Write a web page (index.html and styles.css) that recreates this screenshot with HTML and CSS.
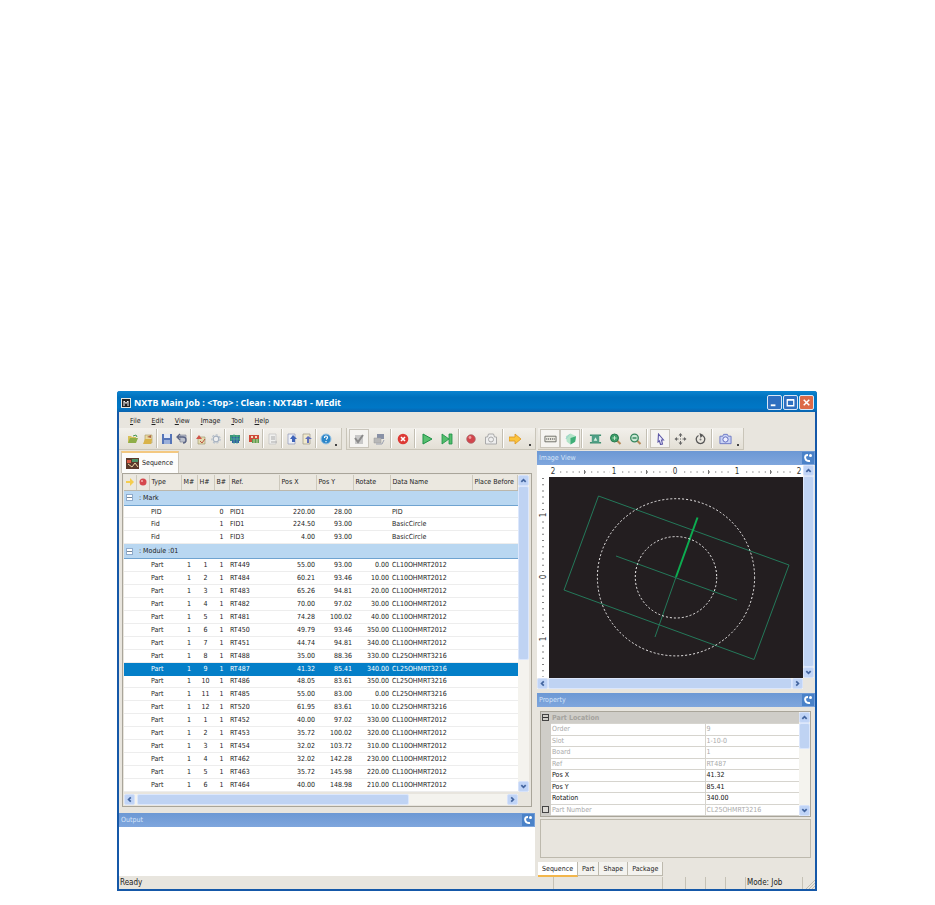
FILE: index.html
```html
<!DOCTYPE html>
<html lang="en">
<head>
<meta charset="utf-8">
<title>MEdit</title>
<link rel="stylesheet" href="styles.css">
</head>
<body>
<main class="window">
  <header class="titlebar">
    <svg class="app-icon" viewBox="0 0 10 10"><rect width="10" height="10" fill="#e8e8e0"/><rect x="1" y="1" width="8" height="8" fill="#222"/><path d="M3 8V3l2 2.500 2-2.500v5" stroke="#fff" fill="none"/></svg>
    <h1>NXTB Main Job : &lt;Top&gt; : Clean : NXT4B1 - MEdit</h1>
    <div class="caption-buttons">
      <button class="cap" aria-label="Minimize"><svg viewBox="0 0 14 14"><path d="M3 10h5" stroke="#fff" stroke-width="2"/></svg></button>
      <button class="cap" aria-label="Maximize"><svg viewBox="0 0 14 14"><path d="M3.500 4.500h7v6h-7zM3 4h8" stroke="#fff" stroke-width="1.400" fill="none"/></svg></button>
      <button class="cap cap-close" aria-label="Close"><svg viewBox="0 0 14 14"><path d="M4 4l6 6M10 4l-6 6" stroke="#fff" stroke-width="1.600"/></svg></button>
    </div>
  </header>

  <nav class="menubar">
    <button><u>F</u>ile</button><button><u>E</u>dit</button><button><u>V</u>iew</button><button><u>I</u>mage</button><button><u>T</u>ool</button><button><u>H</u>elp</button>
  </nav>

  <div class="toolbars">
    <div class="left-bars">
    <div class="toolbar narrow">
      <button aria-label="Open"><svg viewBox="0 0 12 12"><path d="M1 10V3h3l1 1h4v2" fill="#d8c05a"/><path d="M1 10l2-5h8l-2 5z" fill="#8fae48"/><path d="M6 3l3-1 1 2" stroke="#4a9a50" fill="none"/></svg></button>
      <button aria-label="Open job"><svg viewBox="0 0 12 12"><path d="M3 2h7v8H3z" fill="#e9d9a0" stroke="#a89860" stroke-width=".6"/><path d="M1 11l2-5h7l-1 5z" fill="#d9b34a"/><path d="M5 4l4-2v3z" fill="#b06a48"/></svg></button>
      <i class="sep"></i>
      <button aria-label="Save"><svg viewBox="0 0 12 12"><path d="M1 1h10v10H1z" fill="#5675b8"/><path d="M3 1h6v4H3z" fill="#e3e9f6"/><path d="M3 7h6v4H3z" fill="#9bb0da"/></svg></button>
      <button aria-label="Undo"><svg viewBox="0 0 12 12"><path d="M4 2h6v7H4z" fill="#bcc0cc" stroke="#777c90" stroke-width=".6"/><path d="M2 4h5q3 0 3 3t-3 3M4 1L1 4l3 3" stroke="#5b6484" stroke-width="1.300" fill="none"/></svg></button>
      <i class="sep"></i>
      <button aria-label="Check"><svg viewBox="0 0 12 12"><path d="M3 4h7v7H3z" fill="#e5dcb0" stroke="#999268" stroke-width=".6"/><path d="M1 6l3-4 3 4z" fill="#d0564a"/><path d="M5 8l2 2 3-4" stroke="#ba5040" fill="none"/></svg></button>
      <button aria-label="Options"><svg viewBox="0 0 12 12"><circle cx="6" cy="6" r="2.800" stroke="#a5b0bf" stroke-width="1.200" fill="#eee"/><circle cx="6" cy="6" r="4.200" stroke="#b7c0cb" stroke-width="1.200" stroke-dasharray="2 1.800" fill="none"/></svg></button>
      <i class="sep"></i>
      <button aria-label="Board"><svg viewBox="0 0 12 12"><path d="M1 2h10v6H1z" fill="#3a9478"/><path d="M3 4h7v6H3z" fill="#305ea0"/><path d="M5 1v10M8 2v9M2 6h9" stroke="#50b990" stroke-width=".8"/></svg></button>
      <i class="sep"></i>
      <button aria-label="Panel"><svg viewBox="0 0 12 12"><path d="M1 2h10v7H1z" fill="#cf4a3a"/><path d="M3 3h2v2H3zM7 3h2v2H7z" fill="#f2dcc0"/><path d="M4 6h7v4H4z" fill="#5c9b50"/><path d="M6 6v4M9 6v4" stroke="#e6e3b0" stroke-width=".8"/></svg></button>
      <i class="sep"></i>
      <button aria-label="Report"><svg viewBox="0 0 12 12"><path d="M2 1h7v10H2z" fill="#f0f0ee" stroke="#c0c0c0" stroke-width=".7"/><path d="M4 4h4M4 6h4M4 9h6" stroke="#aaa"/></svg></button>
      <i class="sep"></i>
      <button aria-label="Import"><svg viewBox="0 0 12 12"><path d="M2 1h7v10H2z" fill="#edf0f8" stroke="#8c97b8" stroke-width=".7"/><path d="M7 2L4 6h2v3h3V6h2z" fill="#3f64b8"/></svg></button>
      <button aria-label="Export"><svg viewBox="0 0 12 12"><path d="M2 1h7v10H2z" fill="#f0e9cc" stroke="#9d9888" stroke-width=".7"/><path d="M7 3L4 6h2v4h2V6h3z" fill="#6270ba"/></svg></button>
      <i class="sep"></i>
      <button aria-label="Help"><svg viewBox="0 0 12 12"><circle cx="6" cy="6" r="5" fill="#2c86c8" stroke="#9bc4e4"/><path d="M4.500 5q0-2 1.500-2t1.500 1.500Q7.500 5.500 6 6.500M6 8v1.200" stroke="#fff" stroke-width="1.200" fill="none"/></svg></button>
      <b class="more"></b>
    </div>
    <div class="toolbar">
      <button class="on" aria-label="Verify"><svg viewBox="0 0 12 12"><path d="M2 2h8v9H2z" fill="#c8c8c8"/><path d="M2 5l3 4 5-7" stroke="#8a8a8a" stroke-width="2" fill="none"/></svg></button>
      <button aria-label="Transfer"><svg viewBox="0 0 12 12"><path d="M4 1h7v5H4z" fill="#8991a6"/><path d="M1 5h7v5H1z" fill="#b8b8b8" stroke="#999" stroke-width=".5"/><path d="M3 11h6l2-4" stroke="#9aa0b0" fill="none"/></svg></button>
      <i class="sep"></i>
      <button aria-label="Cancel"><svg viewBox="0 0 12 12"><circle cx="6" cy="6" r="5.300" fill="#dd3a35"/><path d="M4 4l4 4M8 4L4 8" stroke="#fff" stroke-width="1.600"/></svg></button>
      <i class="sep"></i>
      <button aria-label="Run"><svg viewBox="0 0 12 12"><path d="M2 1l9 5-9 5z" fill="#58c070" stroke="#1d9146"/></svg></button>
      <button aria-label="Step"><svg viewBox="0 0 12 12"><path d="M1 1l7 5V1h3v10H8V6l-7 5z" fill="#53bd6c" stroke="#1d9146" stroke-width=".8"/></svg></button>
      <i class="sep"></i>
      <button aria-label="Record"><svg viewBox="0 0 12 12"><circle cx="6" cy="6" r="4.300" fill="#d2454c" stroke="#a4686a" stroke-width=".7"/><circle cx="5" cy="4.500" r="1.400" fill="#f0a0a0"/></svg></button>
      <button aria-label="Capture"><svg viewBox="0 0 12 12"><path d="M0.500 4h2l1-3h5l1 3h2v7h-11z" fill="#eee" stroke="#aaa"/><circle cx="6" cy="6.500" r="2.500" fill="none" stroke="#aaa"/></svg></button>
      <i class="sep"></i>
      <button aria-label="Next"><svg viewBox="0 0 12 12"><path d="M0 4h6V1l6 5-6 5V8H0z" fill="#fbc33c" stroke="#dc9420" stroke-width=".8"/></svg></button>
      <b class="more"></b>
    </div>
    </div>
    <div class="right-bars">
    <div class="toolbar">
      <button class="on" aria-label="Scale"><svg viewBox="0 0 14 12"><path d="M1 3h12v6H1z" fill="#ecebe2" stroke="#6c6c66"/><path d="M3 5v2M5 5v2M7 5v2M9 5v2M11 5v2" stroke="#777"/></svg></button>
      <button class="on" aria-label="Image"><svg viewBox="0 0 14 12"><path d="M2 3l5-3 6 3-1 6-5 3-4-3z" fill="#b2e4c8"/><path d="M7 5l6-2-1 6-5 3z" fill="#3fae78"/><path d="M2 6l4-5" stroke="#9cc" /></svg></button>
      <i class="sep"></i>
      <button aria-label="Fit"><svg viewBox="0 0 14 12"><path d="M1 2h12M1 10h12" stroke="#3f8f70" stroke-width="1.500"/><path d="M3 2h8v8H3z" fill="#4f9f86"/><path d="M5 8l2-4 2 4" fill="#d8f0e0"/></svg></button>
      <button aria-label="Zoom in"><svg viewBox="0 0 12 12"><path d="M7 7l4 4" stroke="#b58a58" stroke-width="2"/><circle cx="5" cy="5" r="4" fill="#3f9f6a" stroke="#277a50"/><path d="M3 5h4M5 3v4" stroke="#d8f0d8" stroke-width=".8"/></svg></button>
      <button aria-label="Zoom out"><svg viewBox="0 0 12 12"><path d="M7 7l4 4" stroke="#b58a58" stroke-width="2"/><circle cx="5" cy="5" r="3.800" fill="#c8e8d4" stroke="#36875f" stroke-width="1.300"/><path d="M3 5h4" stroke="#277a50" stroke-width="1.300"/></svg></button>
      <i class="sep"></i>
      <button class="on" aria-label="Select"><svg viewBox="0 0 12 12"><path d="M4 1l5 6H7l1 4-2 .5L5 8 3.500 9z" fill="#eef" stroke="#5d58a6" stroke-width="1.100"/></svg></button>
      <button aria-label="Move"><svg viewBox="0 0 12 12"><path d="M6 0l2 2.500H4zM6 12l2-2.500H4zM0 6l2.500-2v4zM12 6L9.500 4v4z" fill="#666"/><path d="M6 2v2M6 8v2M2 6h2M8 6h2M5.500 6h1" stroke="#666"/></svg></button>
      <button aria-label="Rotate"><svg viewBox="0 0 12 12"><path d="M4 2.500a4.300 4.300 0 1 0 4 0" fill="none" stroke="#555" stroke-width="1.300"/><path d="M5 0l4 2-3 3z" fill="#555"/><circle cx="6" cy="6.500" r="1" fill="#777"/></svg></button>
      <i class="sep"></i>
      <button aria-label="Snapshot"><svg viewBox="0 0 14 12"><path d="M1 3h3l1-2h4l1 2h3v8H1z" fill="#c9d2f4" stroke="#6a76c4"/><circle cx="7" cy="6.500" r="2.800" fill="#eef" stroke="#5a66b8"/></svg></button>
      <b class="more"></b>
    </div>
    </div>
  </div>

  <div class="workspace">
    <section class="left">
      <div class="doc-tabs" role="tablist">
        <button class="doc-tab" role="tab" aria-selected="true"><svg viewBox="0 0 13 11"><rect width="13" height="11" fill="#5c3a2c"/><path d="M1 2h4v3H1z" fill="#d85a44"/><path d="M6 1h6v3H6z" fill="#4a9468"/><path d="M2 6l4 3 3-4 3 4" stroke="#f0d8a8" fill="none"/></svg>Sequence</button>
      </div>
      <div class="list">
        <table class="seq">
          <colgroup><col class="c-a"><col class="c-b"><col class="c-type"><col class="c-m"><col class="c-h"><col class="c-bd"><col class="c-ref"><col class="c-n"><col class="c-n"><col class="c-rot"><col class="c-data"><col></colgroup>
          <thead><tr>
            <th><svg viewBox="0 0 8 8"><path d="M0 3h4V0l4 4-4 4V5H0z" fill="#f5cd4e"/></svg></th>
            <th><svg viewBox="0 0 8 8"><circle cx="4" cy="4" r="3.500" fill="#d5484e"/><circle cx="3" cy="3" r="1" fill="#f3b0b0"/></svg></th>
            <th>Type</th><th>M#</th><th>H#</th><th>B#</th><th>Ref.</th><th>Pos X</th><th>Pos Y</th><th>Rotate</th><th>Data Name</th><th>Place Before</th></tr></thead>
          <tbody>
            <tr class="group"><td colspan="12"><button class="fold" aria-label="Collapse"></button>: Mark</td></tr>
            <tr><td><td><td>PID<td><td><td>0<td>PID1<td>220.00<td>28.00<td><td>PID<td></tr>
            <tr><td><td><td>Fid<td><td><td>1<td>FID1<td>224.50<td>93.00<td><td>BasicCircle<td></tr>
            <tr><td><td><td>Fid<td><td><td>1<td>FID3<td>4.00<td>93.00<td><td>BasicCircle<td></tr>
            <tr class="group"><td colspan="12"><button class="fold" aria-label="Collapse"></button>: Module :01</td></tr>
            <tr><td><td><td>Part<td>1<td>1<td>1<td>RT449<td>55.00<td>93.00<td>0.00<td>CL10OHMRT2012<td></tr>
            <tr><td><td><td>Part<td>1<td>2<td>1<td>RT484<td>60.21<td>93.46<td>10.00<td>CL10OHMRT2012<td></tr>
            <tr><td><td><td>Part<td>1<td>3<td>1<td>RT483<td>65.26<td>94.81<td>20.00<td>CL10OHMRT2012<td></tr>
            <tr><td><td><td>Part<td>1<td>4<td>1<td>RT482<td>70.00<td>97.02<td>30.00<td>CL10OHMRT2012<td></tr>
            <tr><td><td><td>Part<td>1<td>5<td>1<td>RT481<td>74.28<td>100.02<td>40.00<td>CL10OHMRT2012<td></tr>
            <tr><td><td><td>Part<td>1<td>6<td>1<td>RT450<td>49.79<td>93.46<td>350.00<td>CL10OHMRT2012<td></tr>
            <tr><td><td><td>Part<td>1<td>7<td>1<td>RT451<td>44.74<td>94.81<td>340.00<td>CL10OHMRT2012<td></tr>
            <tr><td><td><td>Part<td>1<td>8<td>1<td>RT488<td>35.00<td>88.36<td>330.00<td>CL25OHMRT3216<td></tr>
            <tr class="selected"><td><td><td>Part<td>1<td>9<td>1<td>RT487<td>41.32<td>85.41<td>340.00<td>CL25OHMRT3216<td></tr>
            <tr><td><td><td>Part<td>1<td>10<td>1<td>RT486<td>48.05<td>83.61<td>350.00<td>CL25OHMRT3216<td></tr>
            <tr><td><td><td>Part<td>1<td>11<td>1<td>RT485<td>55.00<td>83.00<td>0.00<td>CL25OHMRT3216<td></tr>
            <tr><td><td><td>Part<td>1<td>12<td>1<td>RT520<td>61.95<td>83.61<td>10.00<td>CL25OHMRT3216<td></tr>
            <tr><td><td><td>Part<td>1<td>1<td>1<td>RT452<td>40.00<td>97.02<td>330.00<td>CL10OHMRT2012<td></tr>
            <tr><td><td><td>Part<td>1<td>2<td>1<td>RT453<td>35.72<td>100.02<td>320.00<td>CL10OHMRT2012<td></tr>
            <tr><td><td><td>Part<td>1<td>3<td>1<td>RT454<td>32.02<td>103.72<td>310.00<td>CL10OHMRT2012<td></tr>
            <tr><td><td><td>Part<td>1<td>4<td>1<td>RT462<td>32.02<td>142.28<td>230.00<td>CL10OHMRT2012<td></tr>
            <tr><td><td><td>Part<td>1<td>5<td>1<td>RT463<td>35.72<td>145.98<td>220.00<td>CL10OHMRT2012<td></tr>
            <tr><td><td><td>Part<td>1<td>6<td>1<td>RT464<td>40.00<td>148.98<td>210.00<td>CL10OHMRT2012<td></tr>
          </tbody>
        </table>
        <div class="vbar"><button aria-label="Scroll up"><svg viewBox="0 0 8 8"><path d="M1.500 5.500L4 3l2.500 2.500"/></svg></button><span class="thumb list-v"></span><button class="end" aria-label="Scroll down"><svg viewBox="0 0 8 8"><path d="M1.500 2.500L4 5l2.500-2.500"/></svg></button></div>
        <div class="hbar"><button aria-label="Scroll left"><svg viewBox="0 0 8 8"><path d="M5.500 1.500L3 4l2.500 2.500"/></svg></button><span class="thumb list-h"></span><button class="end" aria-label="Scroll right"><svg viewBox="0 0 8 8"><path d="M2.500 1.500L5 4 2.500 6.500"/></svg></button></div>
      </div>
      <h2 class="pane-title">Output<button class="pin" aria-label="Pin"><svg viewBox="0 0 10 10"><path d="M5 2Q1 2 2.500 6q1 2.500 4.500 2" stroke="#fff" stroke-width="2" fill="none"/><circle cx="7.500" cy="2.500" r="1.500" fill="#fff"/></svg></button></h2>
      <div class="output"></div>
    </section>

    <section class="right">
      <h2 class="pane-title">Image View<button class="pin" aria-label="Pin"><svg viewBox="0 0 10 10"><path d="M5 2Q1 2 2.500 6q1 2.500 4.500 2" stroke="#fff" stroke-width="2" fill="none"/><circle cx="7.500" cy="2.500" r="1.500" fill="#fff"/></svg></button></h2>
      <div class="viewer">
        <svg class="ruler-x" viewBox="0 0 266 12">
          <path d="M17 7h248" stroke="#555" stroke-width="1.200" stroke-dasharray="1 5.200"/>
          <path d="M47.500 5v4M109.500 5v4M171.500 5v4M233.500 5v4" stroke="#777"/>
          <g fill="#fff"><path d="M12 1h7v11h-7zM73 1h8v11h-8zM135 1h7v11h-7zM196 1h8v11h-8zM258 1h8v11h-8z"/></g>
          <g class="marks"><text x="16" y="9">2</text><text x="77" y="9">1</text><text x="138" y="9">0</text><text x="200" y="9">1</text><text x="262" y="9">2</text></g>
        </svg>
        <svg class="ruler-y" viewBox="0 0 12 201">
          <path d="M6 1v199" stroke="#555" stroke-width="1.500" stroke-dasharray="1 5.200"/>
          <g fill="#fff"><path d="M2 34h9v8H2zM2 96h9v8H2zM2 158h9v8H2z"/></g>
          <g class="marks"><text transform="translate(9 38) rotate(-90)">1</text><text transform="translate(9 100) rotate(-90)">0</text><text transform="translate(9 162) rotate(-90)">1</text></g>
        </svg>
        <svg class="canvas" viewBox="0 0 254 201" preserveAspectRatio="xMidYMid slice" role="img" aria-label="Part placement">
          <rect width="254" height="201" fill="#231e20"/>
          <g fill="none" stroke="#24795a"><path d="M49.500 19L240 88l-35 94.500L15 113z"/><path d="M67 79l121 44M127 100l-21 60"/></g>
          <path d="M127 100l21.500-59.500" stroke="#0cac50" stroke-width="2"/>
          <g fill="none" stroke="#f0eeee" stroke-dasharray="2 2"><circle cx="127" cy="100.300" r="78.600"/><circle cx="127" cy="100.300" r="40.700"/></g>
        </svg>
        <div class="vbar view-v"><button aria-label="Scroll up"><svg viewBox="0 0 8 8"><path d="M1.500 5.500L4 3l2.500 2.500"/></svg></button><span class="thumb grow"></span><button aria-label="Scroll down"><svg viewBox="0 0 8 8"><path d="M1.500 2.500L4 5l2.500-2.500"/></svg></button></div>
        <div class="hbar view-h"><button aria-label="Scroll left"><svg viewBox="0 0 8 8"><path d="M5.500 1.500L3 4l2.500 2.500"/></svg></button><span class="thumb grow"></span><button aria-label="Scroll right"><svg viewBox="0 0 8 8"><path d="M2.500 1.500L5 4 2.500 6.500"/></svg></button></div>
      </div>

      <h2 class="pane-title">Property<button class="pin" aria-label="Pin"><svg viewBox="0 0 10 10"><path d="M5 2Q1 2 2.500 6q1 2.500 4.500 2" stroke="#fff" stroke-width="2" fill="none"/><circle cx="7.500" cy="2.500" r="1.500" fill="#fff"/></svg></button></h2>
      <div class="props-frame">
        <table class="props">
          <colgroup><col class="p-gutter"><col class="p-name"><col></colgroup>
          <tr class="cat"><td><button class="box minus" aria-label="Collapse"></button></td><th colspan="2">Part Location</th></tr>
          <tr><td></td><th>Order</th><td>9</td></tr>
          <tr><td></td><th>Slot</th><td>1-10-0</td></tr>
          <tr><td></td><th>Board</th><td>1</td></tr>
          <tr><td></td><th>Ref</th><td>RT487</td></tr>
          <tr class="live"><td></td><th>Pos X</th><td>41.32</td></tr>
          <tr class="live"><td></td><th>Pos Y</th><td>85.41</td></tr>
          <tr class="live"><td></td><th>Rotation</th><td>340.00</td></tr>
          <tr><td><button class="box" aria-label="Expand"></button></td><th>Part Number</th><td>CL25OHMRT3216</td></tr>
        </table>
        <div class="vbar"><button aria-label="Scroll up"><svg viewBox="0 0 8 8"><path d="M1.500 5.500L4 3l2.500 2.500"/></svg></button><span class="thumb prop-v"></span><button class="end" aria-label="Scroll down"><svg viewBox="0 0 8 8"><path d="M1.500 2.500L4 5l2.500-2.500"/></svg></button></div>
      </div>
      <div class="hint"></div>
      <div class="bottom-tabs" role="tablist"><button class="active" role="tab" aria-selected="true">Sequence</button><button role="tab">Part</button><button role="tab">Shape</button><button role="tab">Package</button></div>
    </section>
  </div>

  <footer class="status"><span class="ready">Ready</span><div class="cells"><span class="s-wide"></span><span class="s-a"></span><span class="s-b"></span><span class="s-b"></span><span class="s-b"></span><span class="s-mode">Mode: Job</span>
    <svg class="grip" viewBox="0 0 12 12"><path d="M3 12l9-9M6 12l6-6M9 12l3-3" stroke="#c0bcb0"/></svg></div></footer>
</main>
</body>
</html>
```
FILE: styles.css
```css
* { box-sizing: border-box; }

body {
  margin: 0;
  padding: 391px 118px 14px 117px;
  background: #fff;
  color: #222;
  font: 7px/12px "DejaVu Sans Condensed", "DejaVu Sans", sans-serif;
}

button {
  font: inherit;
  color: inherit;
  background: none;
  border: 0;
  padding: 0;
  margin: 0;
}

h1, h2 { margin: 0; }
svg { display: block; }

.window {
  background: #e8e5de;
  border: 2px solid #1558a8;
  border-top: 0;
  border-radius: 3px 3px 0 0;
}

/* Title bar */
.titlebar {
  display: flex;
  align-items: center;
  height: 21px;
  margin: 0 -2px;
  padding: 2px 3px 0 4px;
  border-radius: 3px 3px 0 0;
  color: #fff;
  background: linear-gradient(#0b84d0, #0071bd 30%, #0077c6 80%, #0b62ae);
}
.app-icon { width: 10px; height: 10px; margin-right: 3px; }
.titlebar h1 { font: bold 9px/12px "Noto Sans", sans-serif; flex: 1; white-space: nowrap; }
.caption-buttons { display: flex; gap: 1px; }
.cap { width: 15px; height: 15px; border: 1px solid #d9e6f5; border-radius: 2px; background: #2f6fc0; }
.cap-close { background: #dc6a48; }

/* Menu */
.menubar { display: flex; height: 16px; padding: 2px 0 0 11px; gap: 11px; }

/* Toolbars */
.toolbars { display: grid; grid-template-columns: 416fr 278fr; gap: 2px; height: 23px; }
.left-bars { display: flex; gap: 4px; }
.toolbar {
  display: flex;
  align-items: stretch;
  width: max-content;
  height: 22px;
  padding: 1px 2px;
  border: solid #c9c5b9;
  border-width: 0 1px 1px 0;
  background: linear-gradient(#f2f0eb, #e3dfd5);
}
.toolbar.narrow { padding-left: 6px; }
.toolbar button { display: flex; align-items: center; justify-content: center; width: 20px; }
.toolbar.narrow button { width: 15px; }
.toolbar svg { width: 12px; height: 12px; }
.right-bars svg { width: 13px; height: 12px; }
.toolbar .on { background: #f5f4f1; border: 1px solid #c9c5bb; }
.sep { width: 4px; background: linear-gradient(90deg, transparent 1px, #c3bfb3 1px, #c3bfb3 2px, #fff 2px, #fff 3px, transparent 3px); }
.right-bars .sep { width: 5px; }
.more { align-self: flex-end; width: 2px; height: 2px; margin: 0 2px 2px 2px; background: #444; }
.left-bars .toolbar:last-child .more { margin-left: 4px; }
.left-bars .toolbar:last-child { border-left-width: 1px; }

/* Work area */
.workspace { display: grid; grid-template-columns: 416fr 278fr; gap: 2px; }
.left, .right { min-width: 0; }

.doc-tabs { display: flex; padding-left: 2px; height: 22px; }
.doc-tab {
  display: flex;
  align-items: center;
  gap: 3px;
  padding: 0 5px 0 4px;
  background: #fcfcfb;
  border: 1px solid #c9c5bb;
  border-top: 2px solid #f3c880;
  border-bottom: 0;
}
.doc-tab svg { width: 13px; height: 11px; }

.list {
  display: grid;
  grid-template-columns: minmax(0, 1fr) 12px;
  grid-template-rows: auto 13px;
  margin: 0 3px 6px;
  padding: 1px;
  border: 1px solid #a9a59a;
  background: #e8e5de;
}

.seq { width: 100%; height: 317px; border-collapse: collapse; table-layout: fixed; background: #fff; line-height: 10px; }
.seq tr { height: 12px; }
.seq thead tr { height: 15px; }
.seq .group { height: 14px; }
.c-a { width: 12px; }
.c-b { width: 13px; }
.c-type { width: 32px; }
.c-m { width: 16px; }
.c-h { width: 17px; }
.c-bd { width: 15px; }
.c-ref { width: 50px; }
.c-n { width: 37px; }
.c-rot { width: 37px; }
.c-data { width: 82px; }
.seq th, .seq td { padding: 0 0 0 2px; white-space: nowrap; text-align: left; font-weight: normal; }
.seq th { background: #ebe8e0; border-right: 1px solid #cdc9bd; border-bottom: 1px solid #bbb7ab; }
.seq th svg { width: 8px; height: 8px; }
.seq td { border-bottom: 1px solid #ededed; }
.seq td:nth-child(4), .seq td:nth-child(5), .seq td:nth-child(6) { text-align: center; padding: 0; }
.seq td:nth-child(7) { padding-left: 1px; }
.seq td:nth-child(8), .seq td:nth-child(9), .seq td:nth-child(10) { text-align: right; padding: 0 1px 0 0; }
.seq .group td { background: #b9d7f1; border-bottom: 1px solid #6fa3d0; }
.seq .selected td { background: #047fc8; color: #fff; border-color: #047fc8; }
.fold {
  display: inline-block;
  width: 7px;
  height: 7px;
  margin-right: 6px;
  vertical-align: middle;
  border: 1px solid #8fabcc;
  background: linear-gradient(transparent 2px, #789 2px, #789 3px, transparent 3px) #fff;
}

/* Scroll bars */
.vbar, .hbar { display: flex; background: #f4f3ee; }
.vbar { flex-direction: column; width: 11px; }
.hbar { height: 11px; margin-top: 2px; }
.vbar button, .hbar button { flex: none; width: 11px; height: 11px; padding: 1px; border: 1px solid #d6e2fa; border-radius: 2px; background: #c0d4f6; }
.vbar button svg, .hbar button svg { width: 7px; height: 7px; fill: none; stroke: #43659f; stroke-width: 2; }
.thumb { border: 1px solid #dce7fc; border-radius: 2px; background: #bfd3f3; }
.grow { flex: 1; }
.vbar .end { margin-top: auto; }
.hbar .end { margin-left: auto; }
.list-v { height: 174px; }
.list-h { width: 69%; margin-left: 2px; }
.prop-v { height: 26px; }

/* Pane titles */
.pane-title {
  display: flex;
  align-items: center;
  justify-content: space-between;
  height: 14px;
  padding: 0 1px 0 2px;
  color: #d6e5fa;
  font: 7px/12px "DejaVu Sans Condensed", "DejaVu Sans", sans-serif;
  background: linear-gradient(#6c98d4, #7fa6dd);
}
.pin { width: 12px; height: 12px; padding: 1px; background: #4a82c8; }
.output { height: 49px; background: #fff; }

/* Image viewer */
.viewer {
  display: grid;
  grid-template-columns: 12px minmax(0, 1fr) 12px;
  grid-template-rows: 12px auto 11px;
  margin-bottom: 4px;
}
.ruler-x { grid-area: 1 / 1 / 2 / 3; width: 100%; height: 12px; background: #fff; }
.ruler-y { grid-area: 2 / 1; width: 12px; height: 100%; background: #fff; }
.canvas { grid-area: 2 / 2; width: 100%; min-height: 201px; }
.view-v { grid-area: 1 / 3 / 3 / 4; }
.view-h { grid-area: 3 / 1 / 4 / 3; margin: 0; }
.marks { font: 8px "DejaVu Sans Condensed", sans-serif; fill: #333; text-anchor: middle; }

/* Property grid */
.props-frame { display: grid; grid-template-columns: minmax(0, 1fr) 11px; margin: 4px 4px 2px 3px; border: 1px solid #a9a59a; }
.props { width: 100%; height: 104px; border-collapse: collapse; table-layout: fixed; background: #fff; line-height: 10px; color: #aaa; }
.p-gutter { width: 10px; }
.p-name { width: 154px; }
.props tr { height: 11px; }
.props th, .props td { padding: 0 0 0 1px; font-weight: normal; text-align: left; border-bottom: 1px solid #d6d4ce; }
.props td:last-child { border-left: 1px solid #d6d4ce; padding-left: 1px; }
.props td:first-child { background: #cfcdc8; border: 0; padding: 0 1px; }
.props .cat th { background: #cfcdc8; color: #a5a39e; font-weight: bold; }
.props .live { color: #111; }
.box { display: block; width: 7px; height: 7px; border: 1px solid #444; background: #dcdad5; }
.minus { background: linear-gradient(transparent 2px, #333 2px, #333 3px, transparent 3px); }
.hint { height: 39px; margin: 0 4px 4px 3px; border: 1px solid #bdb9ad; }

.bottom-tabs { display: flex; height: 15px; padding-left: 1px; }
.bottom-tabs button { height: 14px; padding: 0 4px; background: #f4f3ef; border: 1px solid #bdb9ad; border-top: 0; border-left: 0; }
.bottom-tabs .active { height: 15px; background: #fff; border-bottom: 2px solid #f2b64c; }

/* Status bar */
.status { display: grid; grid-template-columns: 434fr 262fr; height: 12px; font-size: 8px; }
.ready { padding-left: 1px; }
.cells { display: flex; }
.cells span { border-left: 1px solid #c5c1b5; }
.s-wide { flex: 1; }
.s-a { width: 23px; }
.s-b { width: 20px; }
.s-mode { width: 58px; padding-left: 1px; border-right: 1px solid #c5c1b5; }
.grip { width: 12px; height: 12px; }
```
